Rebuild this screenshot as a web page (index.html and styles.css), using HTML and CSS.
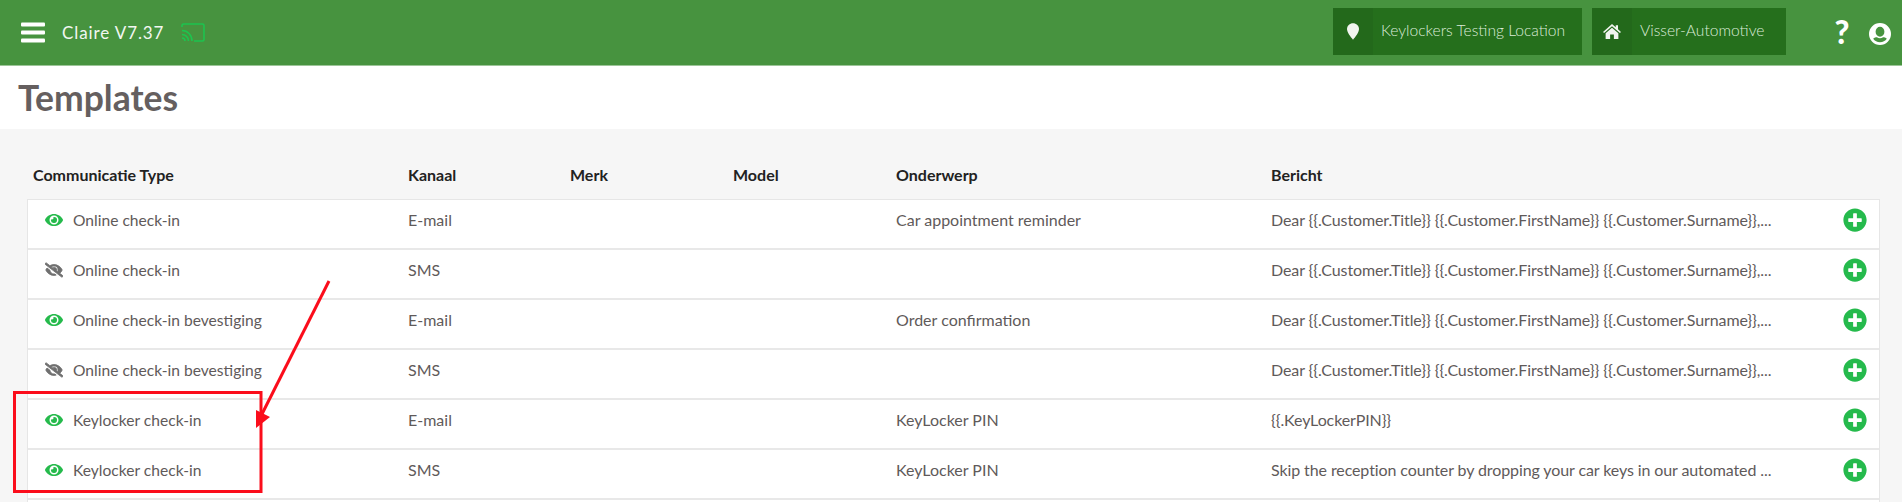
FILE: index.html
```html
<!DOCTYPE html>
<html lang="en">
<head>
    <meta charset="UTF-8">
    <title>Templates</title>
    <link rel="stylesheet" href="styles.css">
</head>
<body>
    <svg width="0" height="0" class="defs">
        <symbol id="eye" viewBox="0 0 576 512"><path d="M572.52 241.4C518.29 135.59 410.93 64 288 64S57.68 135.64 3.48 241.41a32.35 32.35 0 0 0 0 29.19C57.71 376.41 165.07 448 288 448s230.32-71.64 284.52-177.41a32.35 32.35 0 0 0 0-29.19zM288 400a144 144 0 1 1 144-144 143.93 143.93 0 0 1-144 144zm0-240a95.31 95.31 0 0 0-25.31 3.79 47.85 47.85 0 0 1-66.9 66.9A95.78 95.78 0 1 0 288 160z"/></symbol>
        <symbol id="eye-off" viewBox="0 0 640 512"><path d="M320 400c-75.85 0-137.25-58.71-142.9-133.11L72.2 185.82c-13.79 17.3-26.48 35.59-36.72 55.59a32.35 32.35 0 0 0 0 29.19C89.71 376.41 197.07 448 320 448c26.91 0 52.87-4 77.89-10.46L346 397.39a144.13 144.13 0 0 1-26 2.61zm313.82 58.1l-110.55-85.44a331.25 331.25 0 0 0 81.25-102.07 32.35 32.35 0 0 0 0-29.19C550.29 135.59 442.93 64 320 64a308.15 308.15 0 0 0-147.32 37.7L45.46 3.37A16 16 0 0 0 23 6.18L3.37 31.45A16 16 0 0 0 6.18 53.9l588.36 454.73a16 16 0 0 0 22.46-2.81l19.64-25.27a16 16 0 0 0-2.82-22.45zm-183.72-142l-39.3-30.38A94.75 94.75 0 0 0 416 256a94.76 94.76 0 0 0-121.31-92.21A47.65 47.65 0 0 1 304 192a46.64 46.64 0 0 1-1.54 10l-73.61-56.89A142.31 142.31 0 0 1 320 112a143.92 143.92 0 0 1 144 144c0 21.63-5.29 41.79-13.9 60.11z"/></symbol>
        <symbol id="plus" viewBox="0 0 512 512"><path d="M256 8C119 8 8 119 8 256s111 248 248 248 248-111 248-248S393 8 256 8zm144 276c0 6.6-5.4 12-12 12h-92v92c0 6.6-5.4 12-12 12h-56c-6.600 0-12-5.400-12-12v-92h-92c-6.600 0-12-5.400-12-12v-56c0-6.600 5.400-12 12-12h92v-92c0-6.600 5.400-12 12-12h56c6.600 0 12 5.400 12 12v92h92c6.600 0 12 5.400 12 12v56z"/></symbol>
    </svg>

    <header class="topbar">
        <svg class="menu-icon" viewBox="0 0 24 20"><rect y="0" width="24" height="4" rx="1"/><rect y="8" width="24" height="4" rx="1"/><rect y="16" width="24" height="4" rx="1"/></svg>
        <span class="app-name">Claire V7.37</span>
        <svg class="cast-icon" viewBox="0 0 24 19" fill="none" stroke="#1dc44f" stroke-width="1.6">
            <path d="M1 4V2.500Q1 1 2.500 1H21.500Q23 1 23 2.500V16.500Q23 18 21.500 18H13"/>
            <path d="M1 7.500C6.500 7.500 11 12 11 18"/>
            <path d="M1 11.500C4.500 11.500 7.500 14.500 7.500 18"/>
            <path d="M1 15C2.800 15 4 16.200 4 18"/>
        </svg>
        <div class="spacer"></div>
        <div class="selector selector-location">
            <span class="selector-icon">
                <svg class="pin" viewBox="0 0 16 22"><path d="M8 0C3.600 0 0 3.400 0 7.800C0 12.500 5 18.500 8 22C11 18.500 16 12.500 16 7.800C16 3.400 12.400 0 8 0Z"/></svg>
            </span>
            <span class="selector-label">Keylockers Testing Location</span>
        </div>
        <div class="selector selector-dealer">
            <span class="selector-icon">
                <svg class="home" viewBox="0 0 24 20"><path d="M12 0L0 10.500L1.500 12L12 3L22.500 12L24 10.500L20 7V1.500H17V4.400Z"/><path d="M12 5L3.500 12.300V20H9.500V14H14.500V20H20.500V12.300Z"/></svg>
            </span>
            <span class="selector-label">Visser-Automotive</span>
        </div>
        <span class="help">?</span>
        <svg class="user-icon" viewBox="0 0 20 20"><path fill-rule="evenodd" d="M10 0a10 10 0 1 0 0 20a10 10 0 1 0 0-20ZM10 3.500a4 4.500 0 1 1 0 9a4 4.500 0 1 1 0-9ZM10 17.500c-2.600 0-4.800-1.200-6.200-3.100c1-1 2.400-1.400 3.400-1.400c.9.500 1.800.8 2.800.8s1.900-.3 2.800-.8c1 0 2.400.4 3.400 1.400c-1.400 1.900-3.600 3.100-6.200 3.100Z"/></svg>
    </header>

    <div class="title-bar">
        <h1>Templates</h1>
    </div>

    <main class="content">
        <div class="table-head">
            <div class="col-type">Communicatie Type</div>
            <div class="col-channel">Kanaal</div>
            <div class="col-make">Merk</div>
            <div class="col-model">Model</div>
            <div class="col-subject">Onderwerp</div>
            <div class="col-message">Bericht</div>
        </div>

        <div class="rows">
            <div class="row">
                <div class="col-type"><svg class="state on"><use href="#eye"/></svg>Online check-in</div>
                <div class="col-channel">E-mail</div>
                <div class="col-make"></div>
                <div class="col-model"></div>
                <div class="col-subject">Car appointment reminder</div>
                <div class="col-message">Dear {{.Customer.Title}} {{.Customer.FirstName}} {{.Customer.Surname}},...</div>
                <svg class="add"><use href="#plus"/></svg>
            </div>
            <div class="row">
                <div class="col-type"><svg class="state off"><use href="#eye-off"/></svg>Online check-in</div>
                <div class="col-channel">SMS</div>
                <div class="col-make"></div>
                <div class="col-model"></div>
                <div class="col-subject"></div>
                <div class="col-message">Dear {{.Customer.Title}} {{.Customer.FirstName}} {{.Customer.Surname}},...</div>
                <svg class="add"><use href="#plus"/></svg>
            </div>
            <div class="row">
                <div class="col-type"><svg class="state on"><use href="#eye"/></svg>Online check-in bevestiging</div>
                <div class="col-channel">E-mail</div>
                <div class="col-make"></div>
                <div class="col-model"></div>
                <div class="col-subject">Order confirmation</div>
                <div class="col-message">Dear {{.Customer.Title}} {{.Customer.FirstName}} {{.Customer.Surname}},...</div>
                <svg class="add"><use href="#plus"/></svg>
            </div>
            <div class="row">
                <div class="col-type"><svg class="state off"><use href="#eye-off"/></svg>Online check-in bevestiging</div>
                <div class="col-channel">SMS</div>
                <div class="col-make"></div>
                <div class="col-model"></div>
                <div class="col-subject"></div>
                <div class="col-message">Dear {{.Customer.Title}} {{.Customer.FirstName}} {{.Customer.Surname}},...</div>
                <svg class="add"><use href="#plus"/></svg>
            </div>
            <div class="row">
                <div class="col-type"><svg class="state on"><use href="#eye"/></svg>Keylocker check-in</div>
                <div class="col-channel">E-mail</div>
                <div class="col-make"></div>
                <div class="col-model"></div>
                <div class="col-subject">KeyLocker PIN</div>
                <div class="col-message">{{.KeyLockerPIN}}</div>
                <svg class="add"><use href="#plus"/></svg>
            </div>
            <div class="row">
                <div class="col-type"><svg class="state on"><use href="#eye"/></svg>Keylocker check-in</div>
                <div class="col-channel">SMS</div>
                <div class="col-make"></div>
                <div class="col-model"></div>
                <div class="col-subject">KeyLocker PIN</div>
                <div class="col-message">Skip the reception counter by dropping your car keys in our automated ...</div>
                <svg class="add"><use href="#plus"/></svg>
            </div>
            <div class="rows-end"></div>
        </div>
    </main>

    <!-- red markup drawn on top of the screenshot -->
    <svg class="markup" width="1902" height="502" viewBox="0 0 1902 502">
        <rect x="14.500" y="392.500" width="246.500" height="99" fill="none" stroke="#fb0d1b" stroke-width="3"/>
        <line x1="329" y1="281" x2="261" y2="416" stroke="#fb0d1b" stroke-width="3"/>
        <polygon points="256,410 270,417 256,428" fill="#fb0d1b"/>
    </svg>
</body>
</html>
```

FILE: styles.css
```css
* {
    box-sizing: border-box;
}
html, body {
    height: 502px;
    overflow: hidden;
}
body {
    margin: 0;
    font-family: Lato, "Open Sans", sans-serif;
    font-size: 16px;
    color: #5f5a5a;
    background: #f6f6f6;
    position: relative;
}
.defs {
    position: absolute;
}

.topbar {
    height: 66px;
    display: flex;
    align-items: center;
    background: #47933f;
    border-bottom: 1px solid #9cc598;
    padding-left: 21px;
    color: #fff;
}
.menu-icon {
    width: 24px;
    height: 21px;
    fill: #fff;
}
.app-name {
    margin-left: 17px;
    font-size: 17px;
    letter-spacing: 0.9px;
    color: #f2f7f1;
}
.cast-icon {
    width: 24px;
    height: 19px;
    margin-left: 17px;
}
.spacer {
    flex: 1;
}
.selector {
    height: 47px;
    display: flex;
    flex: none;
    align-items: center;
    background: #256f1c;
    color: #dcebd9;
    font-size: 15.6px;
    font-weight: 300;
    margin-top: -3px;
    white-space: nowrap;
}
.selector-label {
    margin-top: -2px;
}
.selector-location {
    width: 249px;
    margin-right: 10px;
}
.selector-dealer {
    width: 194px;
    margin-right: 48px;
}
.selector-icon {
    width: 40px;
    height: 100%;
    display: flex;
    align-items: center;
    justify-content: center;
    background: #23691b;
    margin-right: 8px;
    fill: #f1f5ef;
}
.pin {
    width: 12px;
    height: 17px;
}
.home {
    width: 18px;
    height: 15px;
}
.help {
    width: 16px;
    font-size: 32px;
    font-weight: 900;
    text-align: center;
    margin-right: 19px;
    margin-top: -3px;
}
.user-icon {
    width: 22px;
    height: 22px;
    fill: #fff;
    margin-right: 11px;
    margin-top: 2px;
}

.title-bar {
    height: 63px;
    background: #fff;
    padding-left: 18px;
}
h1 {
    margin: 0;
    font-size: 35.5px;
    line-height: 63px;
    font-weight: 700;
    color: #655f5f;
}

.content {
    padding: 0 22px 0 27px;
}
.table-head {
    height: 70px;
    display: flex;
    align-items: flex-end;
    padding-bottom: 15px;
    padding-left: 6px;
    font-size: 16px;
    font-weight: 700;
    color: #222;
}
.table-head .col-type {
    width: 375px;
}
.rows {
    background: #fff;
    border: 1px solid #e6e6e6;
    border-bottom: 0;
}
.row {
    height: 50px;
    display: flex;
    align-items: flex-start;
    padding-top: 10px;
    padding-left: 5px;
    border-bottom: 2px solid #e8e8e8;
    line-height: 20px;
}
.rows-end {
    height: 2px;
}
.row .col-type {
    width: 375px;
    display: flex;
    align-items: center;
    font-size: 15.6px;
}
.col-channel {
    width: 162px;
}
.col-make,
.col-model {
    width: 163px;
}
.col-subject {
    width: 375px;
}
.row .col-message {
    letter-spacing: -0.1px;
}
.state {
    width: 18px;
    height: 16px;
    margin: 0 10px 0 12px;
}
.state.on {
    fill: #25ba4c;
}
.state.off {
    fill: #6f6f6f;
    stroke: #6f6f6f;
    stroke-width: 30px;
}
.add {
    width: 24px;
    height: 24px;
    fill: #25ba4c;
    margin-left: auto;
    margin-right: 12px;
    margin-top: -2px;
    background: radial-gradient(circle, #fff 60%, transparent 62%);
}

.markup {
    position: absolute;
    left: 0;
    top: 0;
}
```
